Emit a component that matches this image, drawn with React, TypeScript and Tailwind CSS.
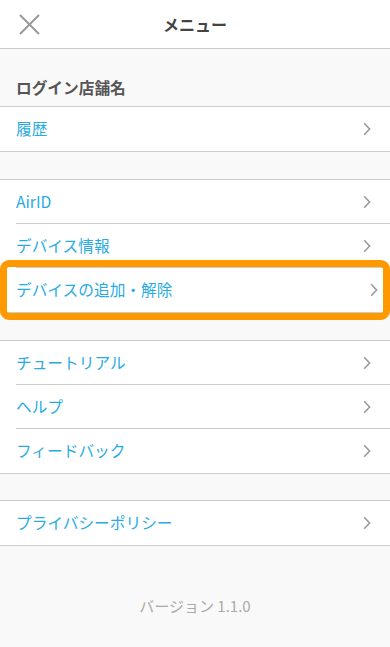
import type { ReactNode } from "react";

const font = {
  fontFamily: '"Noto Sans CJK JP", "Noto Sans", sans-serif',
};

function Chevron() {
  return (
    <svg width="8" height="14" viewBox="0 0 8 14" fill="none">
      <path d="M1.2 1.2 6.6 7l-5.4 5.8" stroke="#9a9a9a" strokeWidth="1.6" />
    </svg>
  );
}

function Row({
  label,
  last = false,
  shifted = false,
}: {
  label: string;
  last?: boolean;
  shifted?: boolean;
}) {
  return (
    <div className="flex h-11 items-center bg-white pl-4">
      <div
        className={
          "flex h-full flex-1 items-center justify-between " +
          (shifted ? "pr-[12px] " : "pr-[19px] ") +
          (last ? "" : "border-b border-[#cccccc]")
        }
      >
        <span className="text-[15.7px] leading-none text-[#29abe2]">
          {label}
        </span>
        <Chevron />
      </div>
    </div>
  );
}

function Group({ children }: { children: ReactNode }) {
  return (
    <div className="border-y border-[#cccccc] bg-white">{children}</div>
  );
}

export default function App() {
  return (
    <div style={font} className="min-h-[647px] bg-[#f9f9f9]">
      <header className="relative flex h-[49px] items-center justify-center border-b border-[#cccccc] bg-white">
        <button className="absolute left-[19px] top-[14px]">
          <svg width="21" height="21" viewBox="0 0 21 21">
            <path d="M1 1l19 19M20 1 1 20" stroke="#999999" strokeWidth="2" />
          </svg>
        </button>
        <h1 className="text-[16px] font-bold text-[#444444]">メニュー</h1>
      </header>

      <div className="flex h-[57px] items-end px-4 pb-[6px]">
        <span className="text-[15.7px] font-bold text-[#555555]">
          ログイン店舗名
        </span>
      </div>
      <Group>
        <Row label="履歴" last />
      </Group>

      <div className="h-[27px]" />
      <Group>
        <Row label="AirID" />
        <Row label="デバイス情報" />
        <div className="relative">
          <Row label="デバイスの追加・解除" last shifted />
          <div className="pointer-events-none absolute -top-2 right-0 -bottom-2 left-0 rounded-[9px] border-[7px] border-[#ff9900]" />
        </div>
      </Group>

      <div className="h-[27px]" />
      <Group>
        <Row label="チュートリアル" />
        <Row label="ヘルプ" />
        <Row label="フィードバック" last />
      </Group>

      <div className="h-[26px]" />
      <Group>
        <Row label="プライバシーポリシー" last />
      </Group>

      <div className="pt-[49px] text-center text-[15px] text-[#aaaaaa]">
        バージョン 1.1.0
      </div>
    </div>
  );
}
